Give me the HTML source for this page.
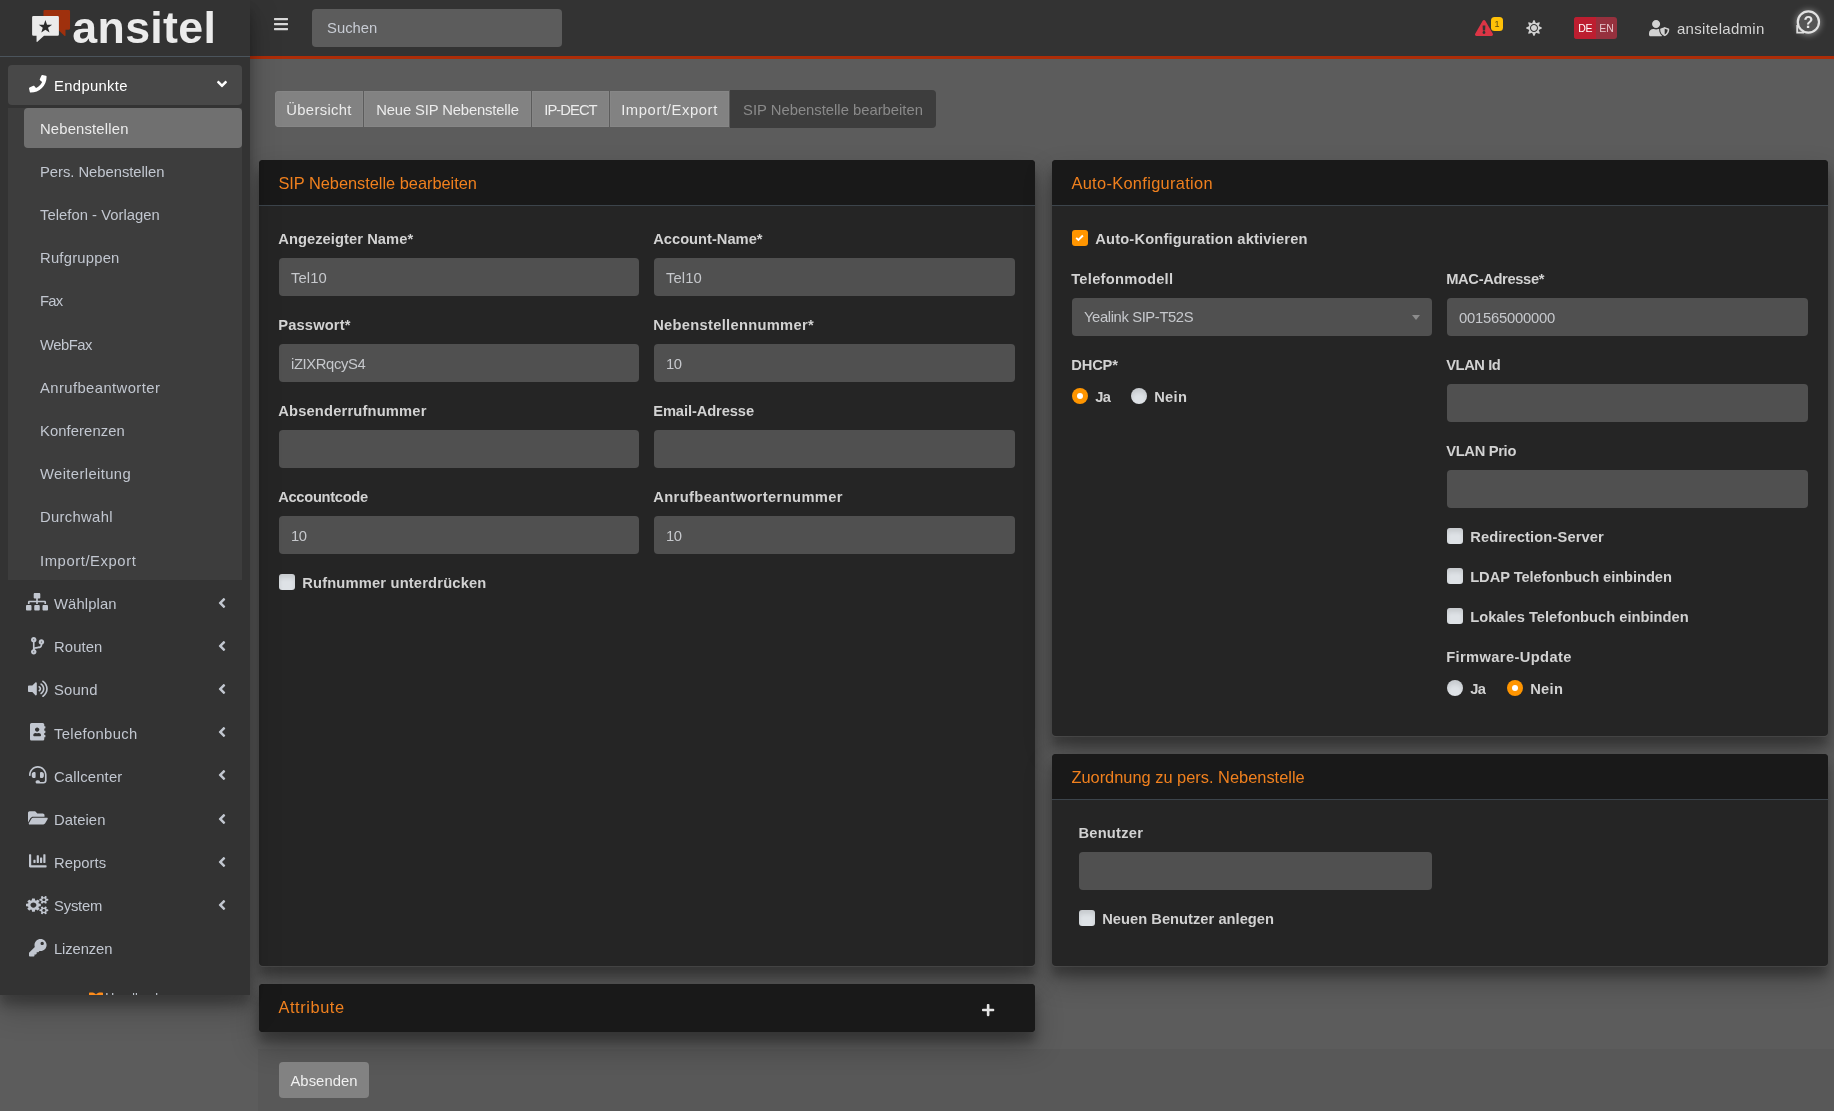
<!DOCTYPE html>
<html lang="de"><head><meta charset="utf-8"><title>ansitel - SIP Nebenstelle bearbeiten</title>
<style>
*{box-sizing:border-box}
html,body{margin:0;padding:0}
html{background:#5c5c5c}
body{width:1834px;height:1111px;overflow:hidden;background:#5c5c5c;font-family:"Liberation Sans",sans-serif;font-size:14.8px;line-height:24px;color:#d4d4d4;position:relative;will-change:transform}
.ic{position:absolute;display:block;overflow:visible}
/* ---------- navbar ---------- */
#nav{position:absolute;left:250px;top:0;width:1584px;height:59px;background:#333;border-bottom:3px solid #ad2d08}
#search{position:absolute;left:62px;top:9px;width:250px;height:38px;background:#5c5c5c;border-radius:4px;color:#c8ccd4;padding:7px 15px;}
.lang{position:absolute;left:1324px;top:17px;width:43px;height:22px;border-radius:3px;background:#96313e;overflow:hidden;font-size:10.5px;line-height:22px;color:#fff}
.lang b{font-weight:normal;position:absolute;top:0;height:22px;line-height:23px;text-align:center}
.lang .de{left:0;width:22px;background:#bd1e30;color:#fff;letter-spacing:-.3px;text-indent:.5px}
.lang .en{left:22px;width:21px;color:#e6c6cb}
#uname{position:absolute;left:1427px;top:17px;color:#d4d4d4;font-size:15px;white-space:nowrap}
/* ---------- sidebar ---------- */
#side{position:absolute;left:0;top:0;width:250px;height:995px;background:#333;overflow:hidden;z-index:5}
#sideshadow{position:absolute;left:0;top:0;width:250px;height:995px;box-shadow:0 14px 28px rgba(0,0,0,.25),0 10px 10px rgba(0,0,0,.22);z-index:4}
#brand{position:absolute;left:0;top:0;width:250px;height:57px;border-bottom:1px solid #4b545c}
#brand .txt{position:absolute;left:72.3px;top:0;font-weight:bold;font-size:44.7px;line-height:56px;color:#ebebeb;letter-spacing:.35px}
#menu{position:absolute;left:8px;top:65px;width:234px}
.it{position:relative;height:40px;margin-bottom:3.2px;border-radius:4px;color:#c2c7d0;white-space:nowrap}
.it>span{position:absolute;left:46px;top:8.5px}
.it.open{background:#484848;color:#fff}
.tree{background:#3d3d3d;margin-bottom:3.2px;padding-bottom:0.2px}
.tree .it{margin-left:16px}
.tree .it>span{left:16px}
.tree .it.act{background:#707070;color:#ececec}
.tree .it:last-child{margin-bottom:0}
/* ---------- content ---------- */
.tabs{position:absolute;left:275px;top:90px;height:38px;display:flex}
.tab{height:36px;margin-top:1px;line-height:38px;padding:0;text-align:center;background:#828282;box-shadow:inset 0 0 0 1px #868686;color:#ececec;margin-right:1px;white-space:nowrap}
.tab:first-child{border-radius:4px 0 0 4px}
.tab.dis{height:38px;margin-top:0;line-height:40px;background:#3d3d3d;box-shadow:none;color:#8a8a8a;border-radius:0 4px 4px 0;margin-right:0}
.card{position:absolute;background:#252525;border-radius:4px;box-shadow:0 14px 28px rgba(0,0,0,.29),0 10px 10px rgba(0,0,0,.23)}
.card.ln{box-shadow:0 1px 0 rgba(255,255,255,.07),0 14px 28px rgba(0,0,0,.29),0 10px 10px rgba(0,0,0,.23)}
.card .hd{position:absolute;left:0;top:0;right:0;height:46px;background:#191919;border-bottom:1px solid #3c444b;border-radius:4px 4px 0 0}
.card .hd h3{position:absolute;left:19.4px;top:11px;margin:0;font-weight:normal;font-size:16.4px;line-height:24px;color:#f0801e;white-space:nowrap}
.lb{position:absolute;margin-top:1px;margin-left:-.8px;font-weight:bold;color:#d2d2d2;white-space:nowrap;font-size:14.7px}
.in{position:absolute;height:38px;background:#505050;border-radius:4px;color:#c6c8cc;padding:8px 12px 6px;white-space:nowrap}
.cb{position:absolute;width:16px;height:16px;border-radius:3px;background:#dee2e6;box-shadow:inset 0 4px 4px rgba(0,0,0,.1)}
.rb{position:absolute;width:16px;height:16px;border-radius:50%;background:#dee2e6;box-shadow:inset 0 4px 4px rgba(0,0,0,.1)}
.rb.on{background:#ff9500;box-shadow:none}
.rb.on:after{content:"";position:absolute;left:5px;top:5px;width:6px;height:6px;border-radius:50%;background:#fff}
.cb.on{background:#ff9500;box-shadow:none}
#send{position:absolute;left:279px;top:1062px;width:90px;height:36px;background:#828282;border-radius:4px;color:#f0f0f0;text-align:center;line-height:38px}
</style></head>
<body>
<!-- NAVBAR -->
<div id="nav">
  <svg class="ic" style="left:24.00px;top:16px;width:14.00px;height:16px;" viewBox="0 0 448 512"><path fill="#d8d8d8" d="M16 132h416c8.837 0 16-7.163 16-16V76c0-8.837-7.163-16-16-16H16C7.163 60 0 67.163 0 76v40c0 8.837 7.163 16 16 16zm0 160h416c8.837 0 16-7.163 16-16v-40c0-8.837-7.163-16-16-16H16c-8.837 0-16 7.163-16 16v40c0 8.837 7.163 16 16 16zm0 160h416c8.837 0 16-7.163 16-16v-40c0-8.837-7.163-16-16-16H16c-8.837 0-16 7.163-16 16v40c0 8.837 7.163 16 16 16z"/></svg>
  <div id="search"><span style="letter-spacing:0.02px">Suchen</span></div>
  <svg class="ic" style="left:1224.70px;top:20px;width:18.00px;height:16px;" viewBox="0 0 576 512"><path fill="#dc3545" d="M569.517 440.013C587.975 472.007 564.806 512 527.940 512H48.054c-36.937 0-59.999-40.055-41.577-71.987L246.423 23.985c18.467-32.009 64.720-31.951 83.154 0l239.940 416.028zM288 354c-25.405 0-46 20.595-46 46s20.595 46 46 46 46-20.595 46-46-20.595-46-46-46zm-43.673-165.346l7.418 136c.347 6.364 5.609 11.346 11.982 11.346h48.546c6.373 0 11.635-4.982 11.982-11.346l7.418-136c.375-6.874-5.098-12.654-11.982-12.654h-63.383c-6.884 0-12.356 5.780-11.981 12.654z"/></svg>
  <div style="position:absolute;left:1241px;top:17px;width:12px;height:14px;border-radius:3.5px;background:#ffc107;color:#5f4a0e;font-size:9px;line-height:14px;text-align:center">1</div>
  <svg class="ic" style="left:1275.50px;top:20.2px;width:16.00px;height:16px;" viewBox="0 0 512 512"><path fill="#d2d2d2" d="M256 160c-52.900 0-96 43.100-96 96s43.100 96 96 96 96-43.100 96-96-43.100-96-96-96zm246.400 80.500l-94.700-47.300 33.500-100.400c4.500-13.600-8.400-26.500-21.900-21.900l-100.400 33.500-47.400-94.800c-6.400-12.800-24.600-12.800-31 0l-47.300 94.700L92.700 70.800c-13.600-4.500-26.500 8.400-21.900 21.900l33.500 100.400-94.700 47.400c-12.800 6.400-12.800 24.600 0 31l94.700 47.300-33.500 100.500c-4.500 13.600 8.400 26.500 21.900 21.900l100.400-33.500 47.300 94.700c6.400 12.800 24.600 12.800 31 0l47.300-94.700 100.400 33.500c13.600 4.500 26.500-8.400 21.900-21.900l-33.500-100.400 94.700-47.300c13-6.500 13-24.700.2-31.100zm-155.900 106c-49.900 49.900-131.100 49.900-181 0-49.900-49.900-49.900-131.100 0-181 49.900-49.900 131.100-49.900 181 0 49.900 49.900 49.900 131.100 0 181z"/></svg>
  <div class="lang"><b class="de">DE</b><b class="en">EN</b></div>
  <svg class="ic" style="left:1399.20px;top:20.2px;width:20.25px;height:16.2px;" viewBox="0 0 640 512"><path fill="#d2d2d2" d="M622.300 271.100l-115.200-45c-4.100-1.600-12.600-3.700-22.200 0l-115.200 45c-10.700 4.200-17.700 14-17.700 24.900 0 111.600 68.700 188.800 132.900 213.900 9.600 3.700 18 1.600 22.200 0C558.400 489.900 640 420.500 640 296c0-10.900-7-20.700-17.700-24.900zM496 462.400V273.300l95.500 37.300c-5.600 87.100-60.900 135.400-95.500 151.800zM224 256c70.700 0 128-57.300 128-128S294.700 0 224 0 96 57.300 96 128s57.300 128 128 128zm96 40c0-2.500.8-4.800 1.100-7.200-2.500-.1-4.900-.8-7.500-.8h-16.700c-22.200 10.200-46.900 16-72.900 16s-50.600-5.800-72.900-16h-16.700C60.200 288 0 348.200 0 422.400V464c0 26.500 21.500 48 48 48h352c6.800 0 13.300-1.500 19.200-4-54-42.900-99.200-116.700-99.200-212z"/></svg>
  <div id="uname"><span style="letter-spacing:0.28px">ansiteladmin</span></div>
  <svg class="ic" style="left:1540px;top:6px;width:36px;height:36px" viewBox="0 0 36 36"><defs><filter id="gl" x="-50%" y="-50%" width="200%" height="200%"><feGaussianBlur stdDeviation="3"/></filter></defs><circle cx="18.4" cy="16.5" r="12.5" fill="#fff" opacity=".38" filter="url(#gl)"/><path d="M7.2 19 L7.2 26.6 L14 26.6" fill="none" stroke="#dcdcdc" stroke-width="1.8"/><circle cx="18.4" cy="16" r="10.6" fill="#555" stroke="#e2e2e2" stroke-width="2.2"/><text x="18.5" y="21.5" text-anchor="middle" font-family="Liberation Sans, sans-serif" font-weight="bold" font-size="16" fill="#e8e8e8">?</text></svg>
</div>

<!-- SIDEBAR -->
<div id="sideshadow"></div>
<div id="side">
  <div id="brand">
    <svg class="ic" style="left:30px;top:8px;width:44px;height:36px" viewBox="30 8 44 36">
      <path d="M44.6 10.1 H68.9 a1.15 1.15 0 0 1 1.15 1.15 V28.55 a1.15 1.15 0 0 1 -1.15 1.15 H65.5 V35.6 a.5 .5 0 0 1 -.9 .3 L58.1 29.7 H43.45 V11.25 a1.15 1.15 0 0 1 1.15 -1.15Z" fill="#9f300d"/>
      <path d="M33.4 16 H57.6 a1.3 1.3 0 0 1 1.3 1.3 V34.55 a1.3 1.3 0 0 1 -1.3 1.3 H44 L37.4 41.8 a.5 .5 0 0 1 -.85 -.35 V35.85 H33.4 a1.3 1.3 0 0 1 -1.3 -1.3 V17.3 a1.3 1.3 0 0 1 1.3 -1.3Z" fill="#ebebeb"/>
      <path d="M45.40 19.95 L47.02 24.73 L52.06 24.79 L48.02 27.80 L49.51 32.61 L45.40 29.70 L41.29 32.61 L42.78 27.80 L38.74 24.79 L43.78 24.73Z" fill="#2a2a2a"/>
    </svg>
    <div class="txt">ansitel</div>
  </div>
  <div id="menu">
    <div class="it open"><svg class="ic" style="left:20.60px;top:9.9px;width:17.60px;height:17.6px;" viewBox="0 0 512 512"><path fill="#fff" d="M493.400 24.600l-104-24c-11.300-2.600-22.900 3.300-27.500 13.900l-48 112c-4.200 9.800-1.400 21.300 6.900 28l60.600 49.600c-36 76.700-98.900 140.500-177.200 177.200l-49.600-60.600c-6.800-8.300-18.200-11.100-28-6.900l-112 48C3.900 366.500-2 378.100.6 389.400l24 104C27.100 504.200 36.700 512 48 512c256.100 0 464-207.500 464-464 0-11.200-7.700-20.900-18.600-23.400z"/></svg><span><span style="letter-spacing:0.35px">Endpunkte</span></span><svg class="ic" style="left:210.00px;top:11.2px;width:8.00px;height:16px;transform:rotate(-90deg)" viewBox="0 0 256 512"><path fill="#fff" d="M31.700 239l136-136c9.400-9.400 24.600-9.400 33.900 0l22.600 22.600c9.400 9.400 9.400 24.600 0 33.900L127.900 256l96.400 96.400c9.400 9.400 9.400 24.600 0 33.900L201.700 409c-9.400 9.400-24.600 9.400-33.900 0l-136-136c-9.500-9.400-9.500-24.600-.1-34z"/></svg></div>
    <div class="tree">
      <div class="it act"><span><span style="letter-spacing:0.18px">Nebenstellen</span></span></div>
      <div class="it"><span><span style="letter-spacing:-0.03px">Pers. Nebenstellen</span></span></div>
      <div class="it"><span><span style="letter-spacing:0.03px">Telefon - Vorlagen</span></span></div>
      <div class="it"><span><span style="letter-spacing:0.22px">Rufgruppen</span></span></div>
      <div class="it"><span><span style="letter-spacing:-0.74px">Fax</span></span></div>
      <div class="it"><span><span style="letter-spacing:-0.51px">WebFax</span></span></div>
      <div class="it"><span><span style="letter-spacing:0.42px">Anrufbeantworter</span></span></div>
      <div class="it"><span><span style="letter-spacing:0.08px">Konferenzen</span></span></div>
      <div class="it"><span><span style="letter-spacing:0.38px">Weiterleitung</span></span></div>
      <div class="it"><span><span style="letter-spacing:0.32px">Durchwahl</span></span></div>
      <div class="it"><span><span style="letter-spacing:0.58px">Import/Export</span></span></div>
    </div>
    <div class="it"><svg class="ic" style="left:18.40px;top:9.9px;width:22.00px;height:17.6px;" viewBox="0 0 640 512"><path fill="#c2c7d0" d="M128 352H32c-17.670 0-32 14.330-32 32v96c0 17.670 14.330 32 32 32h96c17.670 0 32-14.330 32-32v-96c0-17.670-14.330-32-32-32zm-24-80h192v48h48v-48h192v48h48v-57.590c0-21.170-17.230-38.410-38.410-38.410H344v-64h40c17.670 0 32-14.330 32-32V32c0-17.670-14.330-32-32-32H256c-17.670 0-32 14.330-32 32v96c0 17.670 14.330 32 32 32h40v64H94.410C73.230 224 56 241.230 56 262.410V320h48v-48zm264 80h-96c-17.670 0-32 14.330-32 32v96c0 17.670 14.330 32 32 32h96c17.670 0 32-14.330 32-32v-96c0-17.670-14.330-32-32-32zm240 0h-96c-17.670 0-32 14.330-32 32v96c0 17.670 14.330 32 32 32h96c17.670 0 32-14.330 32-32v-96c0-17.670-14.330-32-32-32z"/></svg><span><span style="letter-spacing:0.13px">Wählplan</span></span><svg class="ic" style="left:210.00px;top:11.2px;width:8.00px;height:16px;" viewBox="0 0 256 512"><path fill="#c2c7d0" d="M31.700 239l136-136c9.400-9.400 24.600-9.400 33.900 0l22.600 22.600c9.400 9.400 9.400 24.600 0 33.900L127.900 256l96.400 96.400c9.400 9.400 9.400 24.600 0 33.900L201.700 409c-9.400 9.400-24.600 9.400-33.900 0l-136-136c-9.500-9.400-9.500-24.600-.1-34z"/></svg></div>
    <div class="it"><svg class="ic" style="left:22.80px;top:9.9px;width:13.20px;height:17.6px;" viewBox="0 0 384 512"><path fill="#c2c7d0" d="M384 144c0-44.200-35.800-80-80-80s-80 35.800-80 80c0 36.400 24.300 67.100 57.500 76.800-.6 16.100-4.200 28.500-11 36.900-15.400 19.200-49.300 22.400-85.200 25.700-28.200 2.600-57.400 5.400-81.300 16.900v-144c32.500-10.200 56-40.500 56-76.300 0-44.200-35.800-80-80-80S0 35.800 0 80c0 35.800 23.500 66.100 56 76.300v199.300C23.500 365.900 0 396.200 0 432c0 44.200 35.800 80 80 80s80-35.800 80-80c0-34-21.200-63.100-51.200-74.600 3.100-5.200 7.800-9.800 14.900-13.400 16.200-8.200 40.400-10.400 66.100-12.800 42.200-3.900 90-8.400 118.200-43.400 14-17.400 21.100-39.800 21.600-67.900 31.600-10.800 54.400-40.700 54.400-75.900zM80 64c8.800 0 16 7.200 16 16s-7.200 16-16 16-16-7.200-16-16 7.200-16 16-16zm0 384c-8.800 0-16-7.200-16-16s7.200-16 16-16 16 7.200 16 16-7.200 16-16 16zm224-320c8.800 0 16 7.200 16 16s-7.200 16-16 16-16-7.200-16-16 7.200-16 16-16z"/></svg><span><span style="letter-spacing:0.12px">Routen</span></span><svg class="ic" style="left:210.00px;top:11.2px;width:8.00px;height:16px;" viewBox="0 0 256 512"><path fill="#c2c7d0" d="M31.700 239l136-136c9.400-9.400 24.600-9.400 33.900 0l22.600 22.600c9.400 9.400 9.400 24.600 0 33.900L127.900 256l96.400 96.400c9.400 9.400 9.400 24.600 0 33.900L201.700 409c-9.400 9.400-24.600 9.400-33.900 0l-136-136c-9.500-9.400-9.500-24.600-.1-34z"/></svg></div>
    <div class="it"><svg class="ic" style="left:19.50px;top:9.9px;width:19.80px;height:17.6px;" viewBox="0 0 576 512"><path fill="#c2c7d0" d="M215.030 71.050L126.060 160H24c-13.260 0-24 10.740-24 24v144c0 13.250 10.740 24 24 24h102.060l88.970 88.950c15.030 15.030 40.970 4.470 40.970-16.970V88.020c0-21.460-25.960-31.980-40.970-16.970zm233.320-51.080c-11.170-7.330-26.180-4.240-33.510 6.950-7.340 11.170-4.220 26.180 6.950 33.510 66.270 43.490 105.820 116.600 105.820 195.580 0 78.980-39.550 152.090-105.820 195.580-11.170 7.320-14.290 22.340-6.950 33.500 7.040 10.710 21.930 14.560 33.510 6.950C528.270 439.580 576 351.330 576 256S528.270 72.430 448.350 19.970zM480 256c0-63.530-32.060-121.940-85.770-156.240-11.190-7.140-26.030-3.820-33.120 7.460s-3.780 26.210 7.410 33.360C408.270 165.970 432 209.110 432 256s-23.730 90.030-63.480 115.420c-11.190 7.140-14.500 22.070-7.410 33.360 6.510 10.360 21.120 15.140 33.120 7.460C447.940 377.940 480 319.540 480 256zm-141.770-76.870c-11.580-6.330-26.190-2.160-32.610 9.450-6.390 11.610-2.160 26.200 9.450 32.610C327.980 228.280 336 241.630 336 256c0 14.380-8.020 27.720-20.920 34.810-11.610 6.410-15.840 21-9.450 32.610 6.430 11.660 21.050 15.800 32.610 9.450 28.230-15.550 45.770-45 45.770-76.880s-17.540-61.320-45.780-76.860z"/></svg><span><span style="letter-spacing:0.18px">Sound</span></span><svg class="ic" style="left:210.00px;top:11.2px;width:8.00px;height:16px;" viewBox="0 0 256 512"><path fill="#c2c7d0" d="M31.700 239l136-136c9.400-9.400 24.600-9.400 33.900 0l22.600 22.600c9.400 9.400 9.400 24.600 0 33.900L127.900 256l96.400 96.400c9.400 9.400 9.400 24.600 0 33.900L201.700 409c-9.400 9.400-24.600 9.400-33.900 0l-136-136c-9.500-9.400-9.500-24.600-.1-34z"/></svg></div>
    <div class="it"><svg class="ic" style="left:21.70px;top:9.9px;width:15.40px;height:17.6px;" viewBox="0 0 448 512"><path fill="#c2c7d0" d="M436 160c6.600 0 12-5.400 12-12v-40c0-6.600-5.400-12-12-12h-20V48c0-26.500-21.500-48-48-48H48C21.500 0 0 21.500 0 48v416c0 26.500 21.500 48 48 48h320c26.500 0 48-21.500 48-48v-48h20c6.600 0 12-5.400 12-12v-40c0-6.600-5.400-12-12-12h-20v-64h20c6.600 0 12-5.400 12-12v-40c0-6.600-5.400-12-12-12h-20v-64h20zm-228-32c35.300 0 64 28.700 64 64s-28.700 64-64 64-64-28.700-64-64 28.700-64 64-64zm112 236.800c0 10.600-10 19.200-22.400 19.200H118.400C106 384 96 375.400 96 364.800v-19.200c0-31.800 30.100-57.600 67.200-57.600h5c12.300 5.100 25.700 8 39.800 8s27.600-2.900 39.800-8h5c37.100 0 67.200 25.800 67.200 57.600v19.200z"/></svg><span><span style="letter-spacing:0.34px">Telefonbuch</span></span><svg class="ic" style="left:210.00px;top:11.2px;width:8.00px;height:16px;" viewBox="0 0 256 512"><path fill="#c2c7d0" d="M31.700 239l136-136c9.400-9.400 24.600-9.400 33.900 0l22.600 22.600c9.400 9.400 9.400 24.600 0 33.900L127.900 256l96.400 96.400c9.400 9.400 9.400 24.600 0 33.900L201.700 409c-9.400 9.400-24.600 9.400-33.900 0l-136-136c-9.500-9.400-9.500-24.600-.1-34z"/></svg></div>
    <div class="it"><svg class="ic" style="left:20.60px;top:9.9px;width:17.60px;height:17.6px;" viewBox="0 0 512 512"><path fill="#c2c7d0" d="M192 208c0-17.670-14.330-32-32-32h-16c-35.350 0-64 28.650-64 64v48c0 35.350 28.650 64 64 64h16c17.670 0 32-14.330 32-32V208zm176 144c35.350 0 64-28.650 64-64v-48c0-35.350-28.650-64-64-64h-16c-17.670 0-32 14.330-32 32v112c0 17.670 14.330 32 32 32h16zM256 0C113.180 0 4.580 118.830 0 256v16c0 8.840 7.160 16 16 16h16c8.840 0 16-7.160 16-16v-16c0-114.690 93.310-208 208-208s208 93.310 208 208h-.12c.08 2.430.12 165.720.12 165.720 0 23.350-18.930 42.280-42.280 42.280H320c0-26.510-21.490-48-48-48h-32c-26.510 0-48 21.490-48 48s21.490 48 48 48h181.720c49.860 0 90.280-40.420 90.280-90.280V256C507.420 118.830 398.820 0 256 0z"/></svg><span><span style="letter-spacing:0.18px">Callcenter</span></span><svg class="ic" style="left:210.00px;top:11.2px;width:8.00px;height:16px;" viewBox="0 0 256 512"><path fill="#c2c7d0" d="M31.700 239l136-136c9.400-9.400 24.600-9.400 33.900 0l22.600 22.600c9.400 9.400 9.400 24.600 0 33.900L127.900 256l96.400 96.400c9.400 9.400 9.400 24.600 0 33.900L201.700 409c-9.400 9.400-24.600 9.400-33.900 0l-136-136c-9.500-9.400-9.500-24.600-.1-34z"/></svg></div>
    <div class="it"><svg class="ic" style="left:19.50px;top:9.9px;width:19.80px;height:17.6px;" viewBox="0 0 576 512"><path fill="#c2c7d0" d="M572.694 292.093L500.270 416.248A63.997 63.997 0 0 1 444.989 448H45.025c-18.523 0-30.064-20.093-20.731-36.093l72.424-124.155A64 64 0 0 1 152 256h399.964c18.523 0 30.064 20.093 20.730 36.093zM152 224h328v-48c0-26.510-21.490-48-48-48H272l-64-64H48C21.490 64 0 85.490 0 112v278.046l69.077-118.418C86.214 242.250 117.989 224 152 224z"/></svg><span><span style="letter-spacing:0.06px">Dateien</span></span><svg class="ic" style="left:210.00px;top:11.2px;width:8.00px;height:16px;" viewBox="0 0 256 512"><path fill="#c2c7d0" d="M31.700 239l136-136c9.400-9.400 24.600-9.400 33.900 0l22.600 22.600c9.400 9.400 9.400 24.600 0 33.900L127.900 256l96.400 96.400c9.400 9.400 9.400 24.600 0 33.900L201.700 409c-9.400 9.400-24.600 9.400-33.900 0l-136-136c-9.500-9.400-9.500-24.600-.1-34z"/></svg></div>
    <div class="it"><svg class="ic" style="left:20.60px;top:9.9px;width:17.60px;height:17.6px;" viewBox="0 0 512 512"><path fill="#c2c7d0" d="M332.800 320h38.400c6.400 0 12.800-6.400 12.800-12.800V172.800c0-6.400-6.400-12.800-12.800-12.800h-38.400c-6.400 0-12.800 6.400-12.800 12.800v134.400c0 6.400 6.400 12.800 12.800 12.800zm96 0h38.400c6.400 0 12.800-6.400 12.800-12.800V76.800c0-6.400-6.400-12.800-12.800-12.800h-38.400c-6.400 0-12.800 6.400-12.800 12.800v230.400c0 6.400 6.400 12.800 12.800 12.800zm-288 0h38.400c6.400 0 12.800-6.400 12.800-12.800v-70.400c0-6.400-6.400-12.800-12.800-12.800h-38.400c-6.400 0-12.800 6.400-12.800 12.800v70.400c0 6.400 6.400 12.800 12.800 12.800zm96 0h38.400c6.400 0 12.800-6.400 12.800-12.800V108.800c0-6.400-6.400-12.800-12.800-12.800h-38.400c-6.400 0-12.800 6.400-12.800 12.800v198.400c0 6.400 6.400 12.800 12.800 12.800zM496 384H64V80c0-8.840-7.160-16-16-16H16C7.160 64 0 71.160 0 80v336c0 17.670 14.330 32 32 32h464c8.840 0 16-7.160 16-16v-32c0-8.840-7.160-16-16-16z"/></svg><span><span style="letter-spacing:0.05px">Reports</span></span><svg class="ic" style="left:210.00px;top:11.2px;width:8.00px;height:16px;" viewBox="0 0 256 512"><path fill="#c2c7d0" d="M31.700 239l136-136c9.400-9.400 24.600-9.400 33.900 0l22.600 22.600c9.400 9.400 9.400 24.600 0 33.900L127.900 256l96.400 96.400c9.400 9.400 9.400 24.600 0 33.900L201.700 409c-9.400 9.400-24.600 9.400-33.900 0l-136-136c-9.500-9.400-9.500-24.600-.1-34z"/></svg></div>
    <div class="it"><svg class="ic" style="left:18.2px;top:9.9px;width:22.3px;height:18.2px;" viewBox="0 16 1920 1761" preserveAspectRatio="none"><path fill="#c2c7d0" d="M896 896C896 1037 781 1152 640 1152C499 1152 384 1037 384 896C384 755 499 640 640 640C781 640 896 755 896 896ZM1664 1408C1664 1478 1607 1536 1536 1536C1466 1536 1408 1479 1408 1408C1408 1338 1466 1280 1536 1280C1606 1280 1664 1338 1664 1408ZM1664 384C1664 454 1607 512 1536 512C1466 512 1408 455 1408 384C1408 314 1466 256 1536 256C1606 256 1664 314 1664 384ZM1280 805C1280 791 1270 778 1256 775L1104 752C1095 724 1083 697 1070 670C1098 631 1128 595 1157 556C1161 550 1164 544 1164 537C1164 509 1046 401 1020 377C1014 372 1007 369 999 369C992 369 985 371 979 376L861 465C837 453 812 442 786 434L763 281C761 267 747 256 733 256H547C533 256 521 266 517 280C504 329 499 384 494 434C467 443 442 453 417 466L302 376C296 372 289 369 281 369C252 369 140 490 120 517C115 523 113 530 113 537C113 544 116 551 120 557C152 595 182 632 210 672C197 697 186 722 178 748L23 772C10 774 0 789 0 802V987C0 1001 10 1014 24 1016L176 1040C185 1068 197 1095 211 1122C182 1161 152 1198 123 1236C119 1242 116 1248 116 1255C116 1284 234 1391 260 1415C266 1420 273 1423 281 1423C288 1423 296 1421 301 1416L419 1327C443 1339 468 1350 494 1358L517 1511C519 1525 533 1536 547 1536H733C747 1536 759 1526 763 1512C776 1463 781 1408 786 1357C813 1349 838 1339 863 1326L978 1416C984 1420 991 1423 999 1423C1028 1423 1140 1301 1160 1274C1165 1269 1167 1262 1167 1255C1167 1247 1164 1241 1160 1235C1128 1197 1098 1160 1070 1120C1083 1095 1094 1070 1102 1044L1257 1020C1270 1018 1280 1003 1280 990ZM1920 1338C1920 1323 1791 1309 1771 1307C1763 1289 1753 1271 1741 1255C1750 1235 1792 1135 1792 1117C1792 1115 1791 1112 1788 1110C1776 1103 1669 1040 1664 1040L1658 1042C1624 1076 1594 1115 1566 1154C1556 1153 1546 1152 1536 1152C1526 1152 1516 1153 1506 1154C1496 1139 1421 1040 1408 1040C1403 1040 1296 1104 1284 1110C1281 1112 1280 1115 1280 1117C1280 1134 1322 1235 1331 1255C1319 1271 1309 1289 1301 1307C1281 1309 1152 1323 1152 1338V1478C1152 1493 1281 1507 1301 1509C1309 1528 1319 1545 1331 1561C1322 1581 1280 1682 1280 1699C1280 1701 1281 1704 1284 1706C1296 1713 1403 1777 1408 1777C1421 1777 1496 1677 1506 1662C1516 1663 1526 1664 1536 1664C1546 1664 1556 1663 1566 1662C1576 1677 1651 1777 1664 1777C1669 1777 1776 1713 1788 1706C1791 1704 1792 1702 1792 1699C1792 1681 1750 1581 1741 1561C1753 1545 1763 1528 1771 1509C1791 1507 1920 1493 1920 1478ZM1920 314C1920 299 1791 285 1771 283C1763 265 1753 247 1741 231C1750 211 1792 111 1792 93C1792 91 1791 88 1788 86C1776 79 1669 16 1664 16L1658 18C1624 52 1594 91 1566 130C1556 129 1546 128 1536 128C1526 128 1516 129 1506 130C1496 115 1421 16 1408 16C1403 16 1296 80 1284 86C1281 88 1280 91 1280 93C1280 110 1322 211 1331 231C1319 247 1309 265 1301 283C1281 285 1152 299 1152 314V454C1152 469 1281 483 1301 485C1309 504 1319 521 1331 537C1322 557 1280 658 1280 675C1280 677 1281 680 1284 682C1296 689 1403 753 1408 753C1421 753 1496 653 1506 638C1516 639 1526 640 1536 640C1546 640 1556 639 1566 638C1576 653 1651 753 1664 753C1669 753 1776 689 1788 682C1791 680 1792 678 1792 675C1792 657 1750 557 1741 537C1753 521 1763 504 1771 485C1791 483 1920 469 1920 454Z"/></svg><span><span style="letter-spacing:-0.19px">System</span></span><svg class="ic" style="left:210.00px;top:11.2px;width:8.00px;height:16px;" viewBox="0 0 256 512"><path fill="#c2c7d0" d="M31.700 239l136-136c9.400-9.400 24.600-9.400 33.900 0l22.600 22.600c9.400 9.400 9.400 24.600 0 33.900L127.900 256l96.400 96.400c9.400 9.400 9.400 24.600 0 33.900L201.700 409c-9.400 9.400-24.600 9.400-33.900 0l-136-136c-9.500-9.400-9.500-24.600-.1-34z"/></svg></div>
    <div class="it"><svg class="ic" style="left:20.60px;top:9.9px;width:17.60px;height:17.6px;" viewBox="0 0 512 512"><path fill="#c2c7d0" d="M512 176.001C512 273.203 433.202 352 336 352c-11.220 0-22.190-1.062-32.827-3.069l-24.012 27.014A23.999 23.999 0 0 1 261.223 384H224v40c0 13.255-10.745 24-24 24h-40v40c0 13.255-10.745 24-24 24H24c-13.255 0-24-10.745-24-24v-78.059c0-6.365 2.529-12.470 7.029-16.971l161.802-161.802C163.108 213.814 160 195.271 160 176 160 78.798 238.797.001 335.999 0 433.488-.001 512 78.511 512 176.001zM336 128c0 26.510 21.490 48 48 48s48-21.490 48-48-21.490-48-48-48-48 21.490-48 48z"/></svg><span><span style="letter-spacing:-0.12px">Lizenzen</span></span></div>
    <div class="it" style="margin-top:17.2px"><svg class="ic" style="left:81.2px;top:6px;width:14px;height:12px" viewBox="0 0 14.7 12"><path d="M0 .6 C2.5 0 5 .2 6.6 1.5 L7.35 2.3 L8.1 1.5 C9.7 .2 12.2 0 14.7 .6 V10 C12 9.6 9.5 10 7.35 11.5 C5.2 10 2.7 9.6 0 10Z" fill="#ff8c1a"/></svg><span style="left:97.2px;top:-.3px;font-size:12.5px">Handbuch</span></div>
  </div>
</div>

<div style="position:absolute;left:258px;top:1049px;width:1576px;height:62px;background:rgba(0,0,0,.035)"></div>
<!-- TABS -->
<div class="tabs">
  <div class="tab" style="width:88px"><span style="letter-spacing:0.33px">Übersicht</span></div><div class="tab" style="width:167px"><span style="letter-spacing:-0.14px">Neue SIP Nebenstelle</span></div><div class="tab" style="width:77px"><span style="letter-spacing:-0.98px">IP-DECT</span></div><div class="tab" style="width:119px"><span style="letter-spacing:0.61px">Import/Export</span></div><div class="tab dis" style="width:206px">SIP Nebenstelle bearbeiten</div>
</div>

<!-- CARD 1 -->
<div class="card ln" style="left:259px;top:160px;width:776px;height:806px">
  <div class="hd"><h3><span style="letter-spacing:-0.03px">SIP Nebenstelle bearbeiten</span></h3></div>
  <div class="lb" style="left:20px;top:66px"><span style="letter-spacing:0.07px">Angezeigter Name*</span></div>
  <div class="in" style="left:20px;top:98px;width:360px"><span style="letter-spacing:0.11px">Tel10</span></div>
  <div class="lb" style="left:395px;top:66px">Account-Name*</div>
  <div class="in" style="left:395px;top:98px;width:361px"><span style="letter-spacing:0.11px">Tel10</span></div>
  <div class="lb" style="left:20px;top:152px"><span style="letter-spacing:0.16px">Passwort*</span></div>
  <div class="in" style="left:20px;top:184px;width:360px"><span style="letter-spacing:-0.39px">iZIXRqcyS4</span></div>
  <div class="lb" style="left:395px;top:152px"><span style="letter-spacing:0.30px">Nebenstellennummer*</span></div>
  <div class="in" style="left:395px;top:184px;width:361px"><span style="letter-spacing:-0.37px">10</span></div>
  <div class="lb" style="left:20px;top:238px"><span style="letter-spacing:0.18px">Absenderrufnummer</span></div>
  <div class="in" style="left:20px;top:270px;width:360px"></div>
  <div class="lb" style="left:395px;top:238px"><span style="letter-spacing:-0.10px">Email-Adresse</span></div>
  <div class="in" style="left:395px;top:270px;width:361px"></div>
  <div class="lb" style="left:20px;top:324px"><span style="letter-spacing:-0.31px">Accountcode</span></div>
  <div class="in" style="left:20px;top:356px;width:360px"><span style="letter-spacing:-0.37px">10</span></div>
  <div class="lb" style="left:395px;top:324px"><span style="letter-spacing:0.39px">Anrufbeantworternummer</span></div>
  <div class="in" style="left:395px;top:356px;width:361px"><span style="letter-spacing:-0.37px">10</span></div>
  <div class="cb" style="left:20px;top:414px"></div>
  <div class="lb" style="left:44px;top:410px"><span style="letter-spacing:0.18px">Rufnummer unterdrücken</span></div>
</div>

<!-- CARD 2 -->
<div class="card ln" style="left:1052px;top:160px;width:776px;height:576px">
  <div class="hd"><h3><span style="letter-spacing:0.32px">Auto-Konfiguration</span></h3></div>
  <div class="cb on" style="left:20px;top:70px"><svg class="ic" style="left:3.4px;top:3.6px;width:9px;height:8px" viewBox="0 0 9 8"><path d="M1.2 3.9 L3.4 6 L7.9 1.5" fill="none" stroke="#fff" stroke-width="1.9"/></svg></div>
  <div class="lb" style="left:44px;top:66px"><span style="letter-spacing:0.18px">Auto-Konfiguration aktivieren</span></div>
  <div class="lb" style="left:20px;top:106px"><span style="letter-spacing:0.28px">Telefonmodell</span></div>
  <div class="in" style="left:20px;top:138px;width:360px;padding-top:7px"><span style="letter-spacing:-0.39px">Yealink SIP-T52S</span><svg class="ic" style="left:340px;top:17px;width:8px;height:5px" viewBox="0 0 8 5"><path d="M0 0h8L4 5z" fill="#8c8c8c"/></svg></div>
  <div class="lb" style="left:395px;top:106px"><span style="letter-spacing:-0.34px">MAC-Adresse*</span></div>
  <div class="in" style="left:395px;top:138px;width:361px"><span style="letter-spacing:-0.23px">001565000000</span></div>
  <div class="lb" style="left:20px;top:192px"><span style="letter-spacing:-0.14px">DHCP*</span></div>
  <div class="rb on" style="left:20px;top:228px"></div><div class="lb" style="left:44px;top:224px"><span style="letter-spacing:-0.64px">Ja</span></div>
  <div class="rb" style="left:79px;top:228px"></div><div class="lb" style="left:103px;top:224px"><span style="letter-spacing:0.29px">Nein</span></div>
  <div class="lb" style="left:395px;top:192px"><span style="letter-spacing:-0.42px">VLAN Id</span></div>
  <div class="in" style="left:395px;top:224px;width:361px"></div>
  <div class="lb" style="left:395px;top:278px"><span style="letter-spacing:-0.31px">VLAN Prio</span></div>
  <div class="in" style="left:395px;top:310px;width:361px"></div>
  <div class="cb" style="left:395px;top:368px"></div><div class="lb" style="left:419px;top:364px"><span style="letter-spacing:0.13px">Redirection-Server</span></div>
  <div class="cb" style="left:395px;top:408px"></div><div class="lb" style="left:419px;top:404px"><span style="letter-spacing:-0.07px">LDAP Telefonbuch einbinden</span></div>
  <div class="cb" style="left:395px;top:448px"></div><div class="lb" style="left:419px;top:444px">Lokales Telefonbuch einbinden</div>
  <div class="lb" style="left:395px;top:484px"><span style="letter-spacing:0.37px">Firmware-Update</span></div>
  <div class="rb" style="left:395px;top:520px"></div><div class="lb" style="left:419px;top:516px"><span style="letter-spacing:-0.64px">Ja</span></div>
  <div class="rb on" style="left:455px;top:520px"></div><div class="lb" style="left:479px;top:516px"><span style="letter-spacing:0.29px">Nein</span></div>
</div>

<!-- CARD 3 -->
<div class="card ln" style="left:1052px;top:754px;width:776px;height:212px">
  <div class="hd"><h3>Zuordnung zu pers. Nebenstelle</h3></div>
  <div class="lb" style="left:27.2px;top:66px"><span style="letter-spacing:0.24px">Benutzer</span></div>
  <div class="in" style="left:27px;top:98px;width:353px"></div>
  <div class="cb" style="left:27px;top:156px"></div><div class="lb" style="left:51px;top:152px"><span style="letter-spacing:0.02px">Neuen Benutzer anlegen</span></div>
</div>

<!-- CARD 4 -->
<div class="card" style="left:259px;top:984px;width:776px;height:48px;background:#191919">
  <div class="hd" style="border-bottom:0;border-radius:4px;height:48px"><h3><span style="letter-spacing:0.58px">Attribute</span></h3></div>
  <svg class="ic" style="left:723.00px;top:18.6px;width:12.25px;height:14px;" viewBox="0 0 448 512"><path fill="#e4e4e4" d="M416 208H272V64c0-17.670-14.330-32-32-32h-32c-17.670 0-32 14.330-32 32v144H32c-17.670 0-32 14.330-32 32v32c0 17.670 14.330 32 32 32h144v144c0 17.670 14.330 32 32 32h32c17.670 0 32-14.330 32-32V304h144c17.670 0 32-14.330 32-32v-32c0-17.670-14.330-32-32-32z"/></svg>
</div>

<div id="send"><span style="letter-spacing:0.06px">Absenden</span></div>
</body></html>
